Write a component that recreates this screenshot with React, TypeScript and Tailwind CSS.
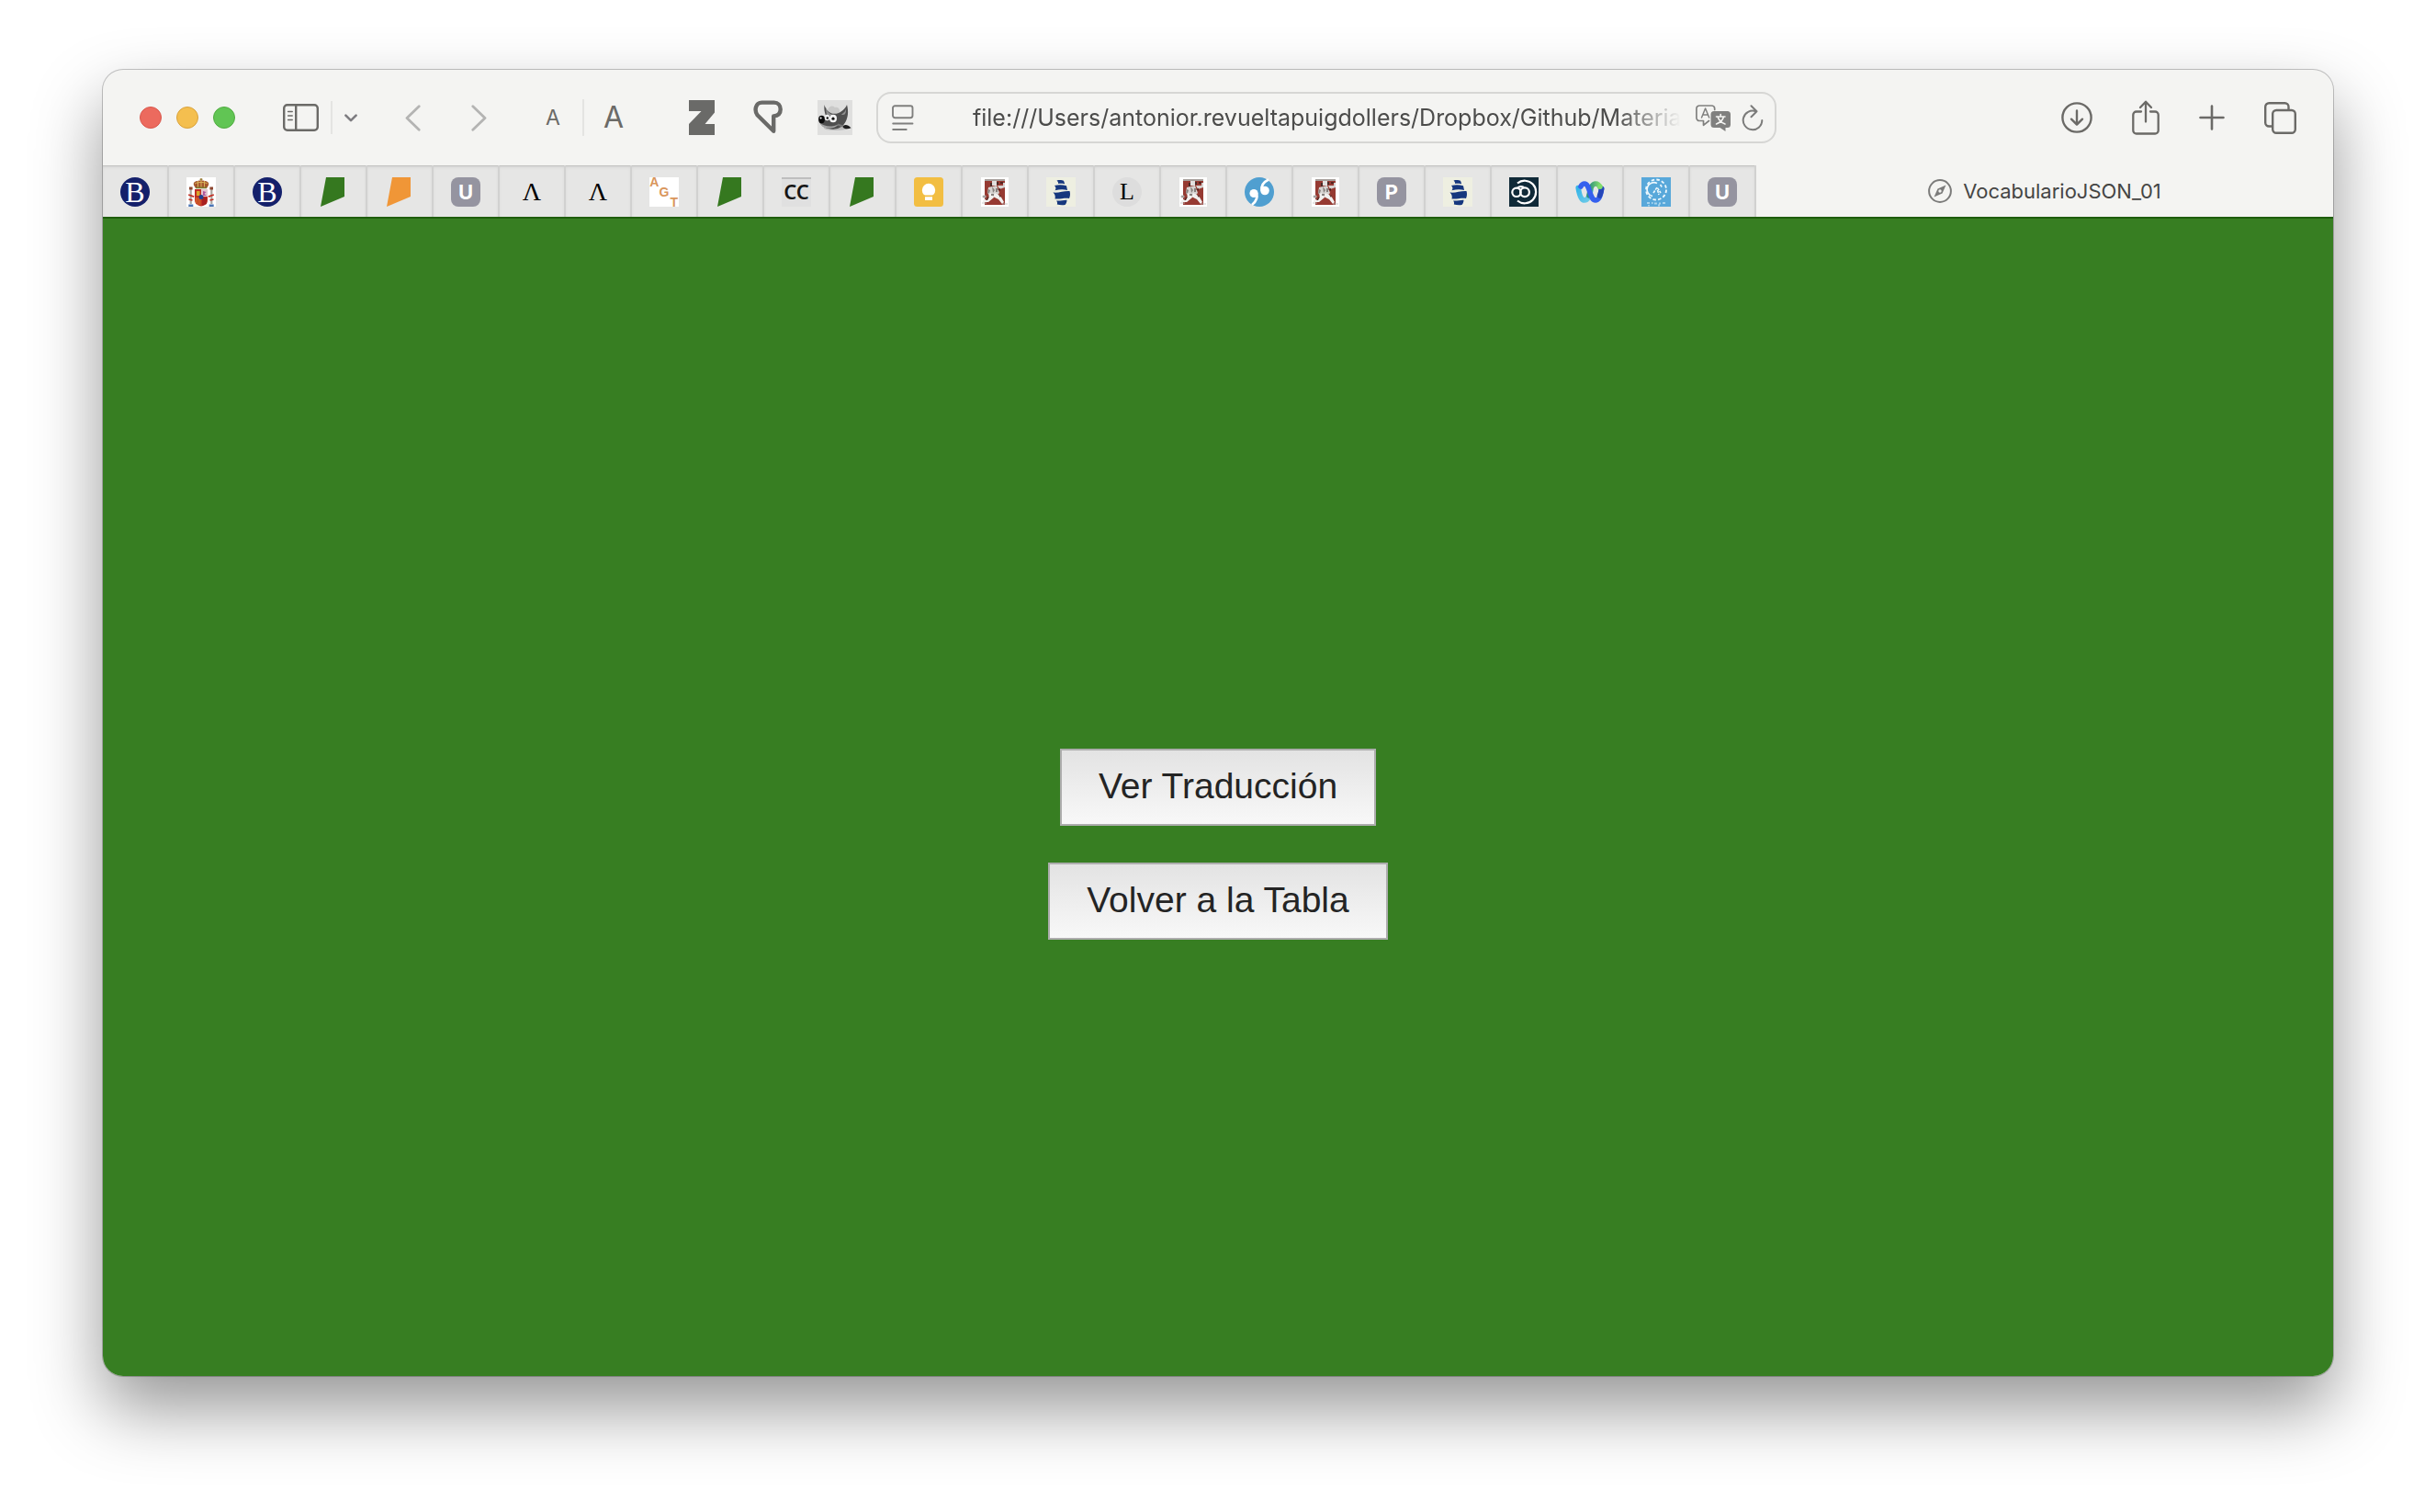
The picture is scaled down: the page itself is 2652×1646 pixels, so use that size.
import type { ReactNode } from "react";

const sans = "font-['Inter',sans-serif]";
const serif = "font-['Liberation_Serif',serif]";

function SidebarIcon() {
  return (
    <svg className="h-[30px] w-[39px]" viewBox="0 0 39 30" fill="none" stroke="#6b6a67" strokeWidth="2.4">
      <rect x="1.2" y="1.2" width="36.6" height="27.6" rx="3.6" />
      <path d="M14.2 1v28" />
      <path d="M5.6 8.6h4.6M5.6 13h4.6M5.6 17.4h4.6" strokeWidth="1.5" strokeLinecap="round" />
    </svg>
  );
}

function ChevronDown() {
  return (
    <svg className="h-[9px] w-[14px]" viewBox="0 0 14 9" fill="none" stroke="#7d7c80" strokeWidth="2.6" strokeLinecap="round" strokeLinejoin="round">
      <path d="M1.4 1.6 7 7.2l5.6-5.6" />
    </svg>
  );
}

function Arrow({ forward = false }: { forward?: boolean }) {
  return (
    <svg className="h-[29px] w-[17px]" viewBox="0 0 17 29" fill="none" stroke="#b4b4b3" strokeWidth="2.8" strokeLinecap="round" strokeLinejoin="round">
      <path d={forward ? "M1.8 1.8 15 14.5 1.8 27.2" : "M15.2 1.8 2 14.5 15.2 27.2"} />
    </svg>
  );
}

function ZIcon() {
  return (
    <svg className="h-[38px] w-[28px]" viewBox="0 0 28 38" fill="#6a6a68">
      <path d="M0 0h28v13.5L17.5 26H28v12H0V26L13.5 12H0z" />
    </svg>
  );
}

function PinIcon() {
  return (
    <svg className="h-[38px] w-[32px]" viewBox="0 0 32 38" fill="none" stroke="#6a6a68" strokeWidth="4.4" strokeLinejoin="round">
      <path d="M9.5 2.6h13.2c4.2 0 7 3 7 7.5 0 4.400-2.700 7-7.500 7.300v16.400L4.500 16.200C1.100 11.500 2.200 2.600 9.500 2.600z" />
    </svg>
  );
}

function GimpIcon() {
  return (
    <svg className="size-[38px]" viewBox="0 0 38 38">
      <rect width="38" height="38" fill="#dfdfde" />
      <path d="M11 13C11 7 16 5 19 8c4-1 6 3 5 6l-8 4z" fill="#c9c9c8" />
      <ellipse cx="20" cy="30.500" rx="13" ry="2.500" fill="#bdbdbd" />
      <path d="M7.500 5c1 4 4 8 8 9.500 2 .5 5 .5 7.500-.5C27 12 31 8.500 32 5c2 7 1.500 15-3 21-4 5.500-11 6.500-17 5C7 29.500 3 27 2 23.500L9 17C7.500 13 7 9 7.500 5z" fill="#4f4f4f" />
      <path d="M9 8c1 4 4 6.500 7 8l-6 2zM31 9c0 3-2.500 5-5 6.500 1 1 3 .5 4-.5 1-1.500 1.200-4 1-6z" fill="#8f8f8f" />
      <path d="M3 25c5 4 13 5 20 1-3 5-13 6-18 2.500z" fill="#a3a3a3" />
      <ellipse cx="4.500" cy="21" rx="3.400" ry="4.200" fill="#0b0b0b" />
      <circle cx="3.600" cy="19.500" r="1" fill="#fff" />
      <ellipse cx="10.500" cy="19" rx="2.800" ry="3.300" fill="#eee" />
      <ellipse cx="17" cy="20" rx="4" ry="4.200" fill="#f4f4f4" />
      <circle cx="10.800" cy="19.500" r="1.200" fill="#111" />
      <circle cx="17" cy="20.200" r="1.600" fill="#111" />
      <path d="M22 26.500l7 2.500" stroke="#777" strokeWidth="2" />
      <path d="M28 28c2-1.500 5-1.500 8.500 2.200-3 1.500-6.500 1.300-8.500-.2z" fill="#1d1d1d" />
    </svg>
  );
}

function ReaderIcon() {
  return (
    <svg className="h-[28px] w-[24px] shrink-0" viewBox="0 0 24 28" fill="none" stroke="#7f7f7e" strokeWidth="1.9" strokeLinecap="round">
      <rect x="1" y="1.2" width="21.5" height="13" rx="2.4" />
      <path d="M1.2 20.5h21.3M1.2 27h14.5" />
    </svg>
  );
}

function TranslateIcon() {
  return (
    <svg className="h-[29px] w-[38px]" viewBox="0 0 38 29" fill="none" strokeLinecap="round" strokeLinejoin="round">
      <path d="M14.500 17.500 8.500 22.300V17.500H4.200a3.300 3.300 0 0 1-3.300-3.300V4.300A3.300 3.300 0 0 1 4.200 1h13.200a3.300 3.300 0 0 1 3.300 3.300v1.200" stroke="#80807f" strokeWidth="1.7" />
      <path d="M6.500 14 10.600 4l4.100 10M7.800 11h5.600" stroke="#80807f" strokeWidth="1.5" />
      <path d="M20 7h14.500A3.500 3.500 0 0 1 38 10.500v11a3.500 3.500 0 0 1-3.500 3.500H32.500v4L26.500 25H20a3.500 3.500 0 0 1-3.500-3.500v-11A3.500 3.500 0 0 1 20 7z" fill="#80807f" />
      <path d="M27.200 10.600v2M22.500 13h9.500M24 13c1.200 4 4 6.500 8 8M30.500 13c-1 4-4 6.500-8 8" stroke="#f4f4f2" strokeWidth="1.6" />
    </svg>
  );
}

function ReloadIcon() {
  return (
    <svg className="h-[29px] w-[24px]" viewBox="0 0 24 29" fill="none" stroke="#7b7b7a" strokeWidth="2" strokeLinecap="round" strokeLinejoin="round">
      <path d="M15.500 7.200A10.300 10.300 0 1 0 22.300 17M10.500 1.200l6 6-6 6" />
    </svg>
  );
}

function DownloadIcon() {
  return (
    <svg className="size-[34px]" viewBox="0 0 34 34" fill="none" stroke="#6b6a67" strokeWidth="2.4" strokeLinecap="round" strokeLinejoin="round">
      <circle cx="17" cy="17" r="15.6" />
      <path d="M17 9.500v15M11 18.700l6 6 6-6" />
    </svg>
  );
}

function ShareIcon() {
  return (
    <svg className="h-[38px] w-[30px]" viewBox="0 0 30 38" fill="none" stroke="#6b6a67" strokeWidth="2.3" strokeLinecap="round" strokeLinejoin="round">
      <path d="M10 12.500H4.800A3.500 3.500 0 0 0 1.300 16v17a3.500 3.500 0 0 0 3.500 3.500h20.400a3.500 3.500 0 0 0 3.500-3.500V16a3.500 3.500 0 0 0-3.500-3.500H20" />
      <path d="M15 23.500V2M9 8l6-6.300L21 8" />
    </svg>
  );
}

function PlusIcon() {
  return (
    <svg className="size-[28px]" viewBox="0 0 28 28" stroke="#6b6a67" strokeWidth="2.6" strokeLinecap="round">
      <path d="M14 1.500v25M1.500 14h25" />
    </svg>
  );
}

function OverviewIcon() {
  return (
    <svg className="size-[35px]" viewBox="0 0 35 35" fill="none" stroke="#6b6a67" strokeWidth="2.4">
      <path d="M8.500 26.500H5.200a4 4 0 0 1-4-4V5.200a4 4 0 0 1 4-4h17.300a4 4 0 0 1 4 4v3.300" />
      <rect x="9.2" y="9" width="24.6" height="24.8" rx="4" />
    </svg>
  );
}

function CompassIcon() {
  return (
    <svg className="size-[26px]" viewBox="0 0 26 26" fill="none">
      <circle cx="13" cy="13" r="11.9" stroke="#7b7b7a" strokeWidth="2" />
      <path d="M19.500 6.500 15.500 15.500 6.500 19.500 10.500 10.500z" fill="#7b7b7a" />
      <circle cx="13" cy="13" r="1.7" fill="#f4f4f2" />
    </svg>
  );
}

const Brit = () => (
  <span className={`flex size-8 items-center justify-center rounded-full bg-[#14206b] text-[32px] leading-8 text-white ${serif}`}>B</span>
);

const Spain = () => (
  <svg className="size-8" viewBox="0 0 32 32">
    <rect width="32" height="32" fill="#fff" />
    <path d="M16 1v3M14.500 2.200h3" stroke="#8a6a1c" strokeWidth="1" />
    <path d="M8.500 9.500C6 5.500 10 3.500 16 3.500s10 2 7.500 6L22 12H10z" fill="#a5562e" />
    <path d="M9 7c3-2 11-2 14 0M12.500 4v7M19.500 4v7M16 3.500V11" stroke="#d8b25a" strokeWidth="1" fill="none" />
    <path d="M10 10.500h12v1.800H10z" fill="#7c7a32" />
    <path d="M9 13h14v12c0 4-3.500 6-7 6.500-3.500-.5-7-2.500-7-6.500z" fill="#c22f24" />
    <path d="M16 13h7v8h-7z" fill="#e3c5d0" />
    <path d="M18 15l3.500 1-2 2 2.500 2h-4z" fill="#b0559b" />
    <path d="M11 15h3.500v5H11z" fill="#d7a52c" />
    <path d="M10.500 22v6M12.700 22v8M14.800 22v8" stroke="#d98d2d" strokeWidth=".8" />
    <path d="M17 22h5v7l-5 2z" fill="#a8201f" />
    <circle cx="16" cy="21.500" r="2.500" fill="#22408f" />
    <path d="M4.700 12v17M27.300 12v17" stroke="#aaa6a0" strokeWidth="2.2" />
    <path d="M3 10.500h3.600v3H3zM25.400 10.500H29v3h-3.600z" fill="#8d4630" />
    <path d="M2.200 19l6 2.200M29.800 19l-6 2.200M2.500 24l4 1M29.500 24l-4 1" stroke="#c22f24" strokeWidth="1.8" />
    <path d="M2.300 29.500h5v2.500h-5zM24.700 29.500h5v2.500h-5z" fill="#4b76b5" />
  </svg>
);

const Flag = ({ fill }: { fill: string }) => (
  <svg className="size-8" viewBox="0 0 32 32">
    <path d="M8 0h20v21L2 32z" fill={fill} />
  </svg>
);

const Tile = ({ letter }: { letter: string }) => (
  <span className={`flex size-8 items-center justify-center rounded-lg bg-[#9594a0] text-[22px] font-bold leading-8 text-white ${sans}`}>{letter}</span>
);

const Lambda = () => <span className={`text-[28px] leading-8 text-black ${serif}`}>Λ</span>;

const Agt = () => (
  <span className="grid size-8 grid-cols-3 grid-rows-3 place-items-center bg-white font-['Liberation_Sans',sans-serif] text-[14px] font-bold leading-none text-[#d9965c]">
    <span className="col-start-1 row-start-1">A</span>
    <span className="col-start-2 row-start-2">G</span>
    <span className="col-start-3 row-start-3">T</span>
  </span>
);

const Cc = () => (
  <span className="flex size-8 items-center justify-center border-t-2 border-[#bebebe] bg-[#e0e0e0] pb-1 font-['Noto_Sans',sans-serif] text-[22px] font-semibold leading-6 text-[#151515]">CC</span>
);

const Keep = () => (
  <svg className="size-8" viewBox="0 0 32 32">
    <rect width="32" height="32" rx="3.5" fill="#f2be42" />
    <circle cx="16" cy="14" r="7.2" fill="#fff" />
    <path d="M12 17h8v3h-8zM12 21.200h8V25h-8z" fill="#fff" />
    <path d="M11 19.600h10v1.400H11z" fill="#f2be42" />
  </svg>
);

const Runner = () => (
  <svg className="h-8 w-[30px]" viewBox="0 0 30 32">
    <rect width="30" height="32" fill="#fff" />
    <path d="M4 2h22v28H4z" fill="#963a32" />
    <path d="M4 2h22v2H4z" fill="#a7a09c" />
    <path d="M12 4h5v5h-5z" fill="#e2e0df" />
    <path d="M10 6h2v4h-2zM17 5h2v3h-2z" fill="#4a2b28" />
    <path d="M18 9h6V6h2v5l-6 2zM8 11l9-2 3 8-3 3-5-2-3 2-2-3z" fill="#d6d3d1" />
    <path d="M11 17l3 5-6 5H2v-2l6-2 1-5zM15 17l6 3 4 7-2 2-4-5-6-3z" fill="#f1f0ef" />
    <path d="M12 10l3 4-2 3zM8 13l2 1-1 3-2 1zM16 12h2v4h-2zM11 18h3v2h-3z" fill="#86807d" />
    <path d="M18 13l3-1v3zM7 22l2-1-2 4H5zM21 5h3v2h-3zM19 19l3 1-1 2z" fill="#54231f" />
    <path d="M2 20h3v2H2zM1 28h5M23 29h6" stroke="#bdbab8" fill="#8d8885" strokeWidth=".8" />
  </svg>
);

const Ship = () => (
  <svg className="size-8" viewBox="0 0 32 32">
    <rect width="32" height="32" fill="#eeefe1" />
    <g fill="#16377e">
      <path d="M11.500 3.500c3-.8 6-.3 7.500.2l1.200 3.500c-2.500-.3-5-.5-7-.2 0-1.500-.7-2.500-1.700-3.500z" />
      <path d="M9 9c5-1.200 9-.8 13 .2l1 4.800c-4-1-8-1-13.500.2C11 12.500 10.500 10.500 9 9z" />
      <path d="M7.500 16.500c6 .8 12-2 18-1.500.8 2.500.7 5.500-.5 8-5-.8-10 1-15.500.5.8-2.700 0-5-2-7z" />
      <path d="M11 25.500c4 .5 8-1 11.500-.8 0 2-.8 4-2 5.300-3 .5-6 .3-8.700-.5.500-1.500.2-3-.8-4z" />
    </g>
  </svg>
);

const Ell = () => (
  <span className={`flex size-8 items-center justify-center rounded-full bg-[#dddddd] text-[26px] leading-8 text-black ${serif}`}>L</span>
);

const Quote = () => (
  <svg className="size-8" viewBox="0 0 32 32">
    <circle cx="16" cy="16" r="16" fill="#509fd0" />
    <circle cx="10" cy="17.500" r="4.600" fill="#fff" />
    <circle cx="22" cy="14.500" r="4.800" fill="#fff" />
    <path d="M13 17c1.500 5 0 9-5 13" stroke="#fff" strokeWidth="2.6" fill="none" />
    <path d="M18.700 14.500C17.500 9 20 5.500 26 2.500" stroke="#fff" strokeWidth="2.6" fill="none" />
  </svg>
);

const Infinity = () => (
  <svg className="size-8" viewBox="0 0 32 32" fill="none" stroke="#fff" strokeWidth="2.2">
    <rect width="32" height="32" fill="#102a38" stroke="none" />
    <path d="M9 6.500a12.300 12.300 0 1 1 0 19" />
    <circle cx="8" cy="16.300" r="4.700" />
    <circle cx="17" cy="16.300" r="4.900" />
    <path d="M9 11.800c2-2 4.500-2 7-.8" />
  </svg>
);

const Webex = () => (
  <svg className="size-8" viewBox="0 0 32 32" fill="none" strokeLinecap="round" strokeWidth="5.6">
    <defs>
      <linearGradient id="wx-left" x1="0" x2="1" y1="0" y2="1">
        <stop offset="0" stopColor="#35b5e8" />
        <stop offset="1" stopColor="#6fcbe8" />
      </linearGradient>
      <linearGradient id="wx-green" x1="0" x2="1">
        <stop offset="0" stopColor="#2f8f7e" />
        <stop offset="1" stopColor="#82dd6c" />
      </linearGradient>
    </defs>
    <path d="M3.200 11.500C4.500 20 6.500 25 10 25c4.500 0 5.500-6 7-11" stroke="url(#wx-left)" />
    <path d="M15 20c1-7 3-13 7-13 2.500 0 4 1.500 5 4" stroke="url(#wx-green)" />
    <path d="M6 10c1-2 2-3 4-3 6 0 5.500 18 12 18 4 0 5.800-6 6.600-12.500" stroke="#3560ee" />
    <path d="M26.500 20c1-2.500 1.700-5 2.100-7.500" stroke="#2546b8" />
    <circle cx="27" cy="10.300" r="2.700" fill="#82dd6c" />
  </svg>
);

const Seal = () => (
  <svg className="size-8" viewBox="0 0 32 32" fill="none" stroke="#eef8fd">
    <rect width="32" height="32" fill="#58a8da" stroke="none" />
    <circle cx="16" cy="13.500" r="11" strokeWidth="1.8" strokeDasharray="3.500 2.260" />
    <path d="M12 20.500a7.500 7.500 0 1 1 5-14" strokeWidth="1.7" />
    <path d="M13 17l4-6 4 6M17.500 14l1.500 5M20.500 8l2 3" strokeWidth="1.6" strokeDasharray="3 1" />
    <path d="M6 28h3M11 28h1.500M14 28.500h3M19 28.500h2M23 28h3M8 30v1.500M18 30.500h2" strokeWidth="1.8" stroke="#a8d4ee" />
  </svg>
);

const tabs: { name: string; icon: ReactNode }[] = [
  { name: "Britannica", icon: <Brit /> },
  { name: "Gobierno de España", icon: <Spain /> },
  { name: "Britannica", icon: <Brit /> },
  { name: "Materiales", icon: <Flag fill="#35781f" /> },
  { name: "Cursos", icon: <Flag fill="#f09637" /> },
  { name: "Universidad", icon: <Tile letter="U" /> },
  { name: "Logeion", icon: <Lambda /> },
  { name: "Logeion", icon: <Lambda /> },
  { name: "AGT", icon: <Agt /> },
  { name: "Materiales", icon: <Flag fill="#35781f" /> },
  { name: "CC", icon: <Cc /> },
  { name: "Materiales", icon: <Flag fill="#35781f" /> },
  { name: "Notas", icon: <Keep /> },
  { name: "Perseus", icon: <Runner /> },
  { name: "Biblioteca", icon: <Ship /> },
  { name: "Lexicon", icon: <Ell /> },
  { name: "Perseus", icon: <Runner /> },
  { name: "Citas", icon: <Quote /> },
  { name: "Perseus", icon: <Runner /> },
  { name: "Portal", icon: <Tile letter="P" /> },
  { name: "Biblioteca", icon: <Ship /> },
  { name: "Scaife", icon: <Infinity /> },
  { name: "Webex", icon: <Webex /> },
  { name: "Sello", icon: <Seal /> },
  { name: "Universidad", icon: <Tile letter="U" /> },
];

function ToolButton({ label, className = "", children }: { label: string; className?: string; children: ReactNode }) {
  return (
    <button type="button" aria-label={label} className={`flex shrink-0 items-center justify-center text-[#6b6a67] ${className}`}>
      {children}
    </button>
  );
}

function Toolbar() {
  return (
    <header className="flex h-[104px] items-center px-10">
      <div className="flex gap-4">
        <ToolButton label="Cerrar" className="size-6 rounded-full border border-[#d9574c] bg-[#ec6a5e]">{null}</ToolButton>
        <ToolButton label="Minimizar" className="size-6 rounded-full border border-[#d9a23c] bg-[#f4bf4f]">{null}</ToolButton>
        <ToolButton label="Ampliar" className="size-6 rounded-full border border-[#50ab40] bg-[#61c554]">{null}</ToolButton>
      </div>
      <ToolButton label="Barra lateral" className="ml-[52px]"><SidebarIcon /></ToolButton>
      <span className="ml-[13px] h-9 w-0.5 bg-[#e4e4e2]" />
      <ToolButton label="Grupos de pestañas" className="ml-[13px]"><ChevronDown /></ToolButton>
      <ToolButton label="Atrás" className="ml-[52px]"><Arrow /></ToolButton>
      <ToolButton label="Adelante" className="ml-[55px]"><Arrow forward /></ToolButton>
      <ToolButton label="Reducir texto" className={`ml-14 w-8 text-[23px] leading-8 ${sans}`}>A</ToolButton>
      <span className="ml-4 h-10 w-0.5 bg-[#e4e4e2]" />
      <ToolButton label="Aumentar texto" className={`ml-4 w-8 text-[32px] leading-8 ${sans}`}>A</ToolButton>
      <ToolButton label="Zotero" className="ml-[66px]"><ZIcon /></ToolButton>
      <ToolButton label="Marcador" className="ml-[42px]"><PinIcon /></ToolButton>
      <ToolButton label="GIMP" className="ml-[38px]"><GimpIcon /></ToolButton>
      <div className="ml-[26px] flex h-14 min-w-0 flex-1 items-center rounded-2xl border-2 border-[#d6d6d4] pl-[15px] pr-3">
        <ReaderIcon />
        <input
          type="text"
          aria-label="Dirección"
          defaultValue="file:///Users/antonior.revueltapuigdollers/Dropbox/Github/Materiales"
          className={`ml-16 mr-4 h-10 min-w-0 flex-1 bg-transparent text-[25px] text-[#4c4c4b] outline-none [mask-image:linear-gradient(to_right,black_calc(100%-70px),transparent)] ${sans}`}
        />
        <ToolButton label="Traducir"><TranslateIcon /></ToolButton>
        <ToolButton label="Recargar" className="ml-3"><ReloadIcon /></ToolButton>
      </div>
      <div className="ml-[310px] flex items-center gap-[43px]">
        <ToolButton label="Descargas"><DownloadIcon /></ToolButton>
        <ToolButton label="Compartir"><ShareIcon /></ToolButton>
        <ToolButton label="Nueva pestaña"><PlusIcon /></ToolButton>
        <ToolButton label="Todas las pestañas"><OverviewIcon /></ToolButton>
      </div>
    </header>
  );
}

function TabBar() {
  return (
    <nav aria-label="Pestañas" className="flex h-14">
      {tabs.map((tab, i) => (
        <button
          key={i}
          type="button"
          aria-label={tab.name}
          className="flex w-[72px] shrink-0 items-center justify-center border-r-2 border-[#d1d1d0] bg-[#e6e6e5] pt-0.5 shadow-[inset_0_1px_0_#c2c2c1,inset_0_3px_4px_-2px_#c8c8c7]"
        >
          {tab.icon}
        </button>
      ))}
      <button type="button" className={`flex min-w-0 flex-1 items-center justify-center gap-3 text-[22px] text-[#454544] ${sans}`}>
        <CompassIcon />
        VocabularioJSON_01
      </button>
    </nav>
  );
}

function PageButton({ children }: { children: ReactNode }) {
  return (
    <button
      type="button"
      className="border-2 border-[#adadad] bg-linear-to-b from-[#e3e3e3] to-[#f8f8f8] px-10 pt-[17px] pb-[19px] font-['Liberation_Sans',sans-serif] text-[39px] leading-[44px] text-[#242424]"
    >
      {children}
    </button>
  );
}

export default function App() {
  return (
    <div className="flex min-h-screen flex-col bg-white px-28 pt-[76px] pb-[148px]">
      <div className="flex flex-1 flex-col overflow-hidden rounded-[22px] bg-[#f4f4f2] shadow-[0_0_0_1px_rgba(0,0,0,0.22),0_36px_76px_rgba(0,0,0,0.41)]">
        <Toolbar />
        <TabBar />
        <main className="flex flex-1 flex-col items-center justify-center gap-10 border-t-2 border-[#1f5e0c] bg-[#377e22] pt-[102px]">
          <PageButton>Ver Traducción</PageButton>
          <PageButton>Volver a la Tabla</PageButton>
        </main>
      </div>
    </div>
  );
}
